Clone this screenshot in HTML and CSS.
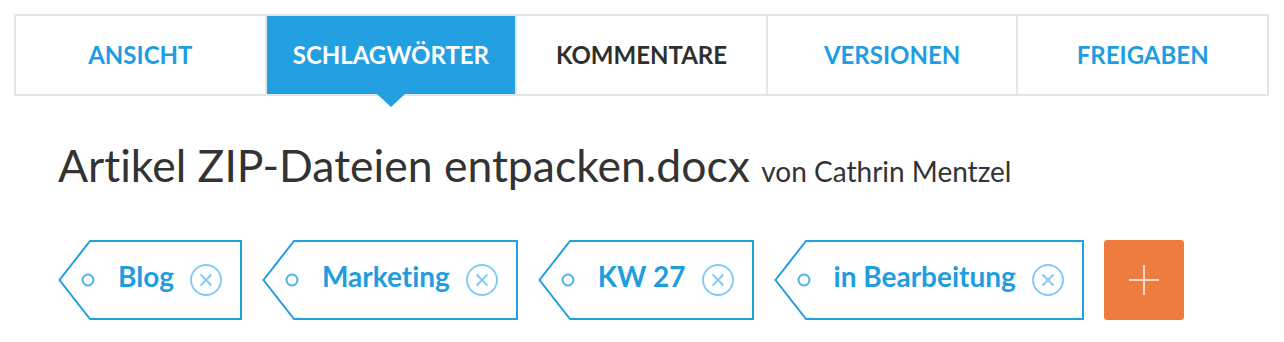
FILE: index.html
```html
<!DOCTYPE html>
<html lang="de">
<head>
<meta charset="utf-8">
<title>Schlagwörter</title>
<link rel="stylesheet" href="styles.css">
</head>
<body>
<nav class="tabs">
  <a class="tab">Ansicht</a>
  <a class="tab tab-active">Schlagwörter</a>
  <a class="tab tab-dark">Kommentare</a>
  <a class="tab">Versionen</a>
  <a class="tab">Freigaben</a>
</nav>
<main class="content">
  <h1 class="title">Artikel ZIP-Dateien entpacken.docx <span class="author">von Cathrin Mentzel</span></h1>
  <div class="tags">
    <div class="tag">
      <svg class="tag-tip" width="40" height="80" viewBox="0 0 40 80"><path d="M40 1 H32 L1.5 40 L32 79 H40" fill="none" stroke="#21a0e0" stroke-width="2"/><circle cx="30" cy="40" r="5.5" fill="none" stroke="#4fb2e8" stroke-width="2"/></svg>
      <div class="tag-body"><span class="tag-label">Blog</span><svg class="tag-x" width="32" height="32" viewBox="0 0 32 32"><circle cx="16" cy="16" r="15" fill="none" stroke="#86ccf1" stroke-width="2"/><path d="M10.5 10.5 L21.5 21.5 M21.5 10.5 L10.5 21.5" stroke="#86ccf1" stroke-width="2"/></svg></div>
    </div>
    <div class="tag">
      <svg class="tag-tip" width="40" height="80" viewBox="0 0 40 80"><path d="M40 1 H32 L1.5 40 L32 79 H40" fill="none" stroke="#21a0e0" stroke-width="2"/><circle cx="30" cy="40" r="5.5" fill="none" stroke="#4fb2e8" stroke-width="2"/></svg>
      <div class="tag-body"><span class="tag-label">Marketing</span><svg class="tag-x" width="32" height="32" viewBox="0 0 32 32"><circle cx="16" cy="16" r="15" fill="none" stroke="#86ccf1" stroke-width="2"/><path d="M10.5 10.5 L21.5 21.5 M21.5 10.5 L10.5 21.5" stroke="#86ccf1" stroke-width="2"/></svg></div>
    </div>
    <div class="tag">
      <svg class="tag-tip" width="40" height="80" viewBox="0 0 40 80"><path d="M40 1 H32 L1.5 40 L32 79 H40" fill="none" stroke="#21a0e0" stroke-width="2"/><circle cx="30" cy="40" r="5.5" fill="none" stroke="#4fb2e8" stroke-width="2"/></svg>
      <div class="tag-body"><span class="tag-label">KW 27</span><svg class="tag-x" width="32" height="32" viewBox="0 0 32 32"><circle cx="16" cy="16" r="15" fill="none" stroke="#86ccf1" stroke-width="2"/><path d="M10.5 10.5 L21.5 21.5 M21.5 10.5 L10.5 21.5" stroke="#86ccf1" stroke-width="2"/></svg></div>
    </div>
    <div class="tag">
      <svg class="tag-tip" width="40" height="80" viewBox="0 0 40 80"><path d="M40 1 H32 L1.5 40 L32 79 H40" fill="none" stroke="#21a0e0" stroke-width="2"/><circle cx="30" cy="40" r="5.5" fill="none" stroke="#4fb2e8" stroke-width="2"/></svg>
      <div class="tag-body"><span class="tag-label">in Bearbeitung</span><svg class="tag-x" width="32" height="32" viewBox="0 0 32 32"><circle cx="16" cy="16" r="15" fill="none" stroke="#86ccf1" stroke-width="2"/><path d="M10.5 10.5 L21.5 21.5 M21.5 10.5 L10.5 21.5" stroke="#86ccf1" stroke-width="2"/></svg></div>
    </div>
    <button class="add-btn" type="button" aria-label="Schlagwort hinzufügen"><svg width="30" height="30" viewBox="0 0 30 30"><path d="M0 15 H30 M15 0 V30" stroke="#fbd9c4" stroke-width="2"/></svg></button>
  </div>
</main>
</body>
</html>
```

FILE: styles.css
```css
html, body {
  margin: 0;
  padding: 0;
  background: #ffffff;
}

body {
  padding: 14px 15px 0 14px;
  font-family: Lato, "Open Sans", sans-serif;
  font-variant-ligatures: no-common-ligatures;
}

.tabs {
  display: flex;
  border: 2px solid #e2e6ea;
  height: 78px;
}

.tab {
  flex: 1 1 0;
  display: flex;
  align-items: center;
  justify-content: center;
  border-left: 2px solid #e2e6ea;
  padding-bottom: 2px;
  text-transform: uppercase;
  font-weight: 700;
  font-size: 24px;
  color: #1f9de0;
  position: relative;
}

.tab:first-child {
  border-left: none;
}

.tab-dark {
  color: #2f2f2f;
}

.tab-active {
  background: #22a0e1;
  color: #ffffff;
}

.tab-active::after {
  content: "";
  position: absolute;
  top: 100%;
  left: 50%;
  margin-left: -14px;
  border-top: 13px solid #22a0e1;
  border-left: 14px solid transparent;
  border-right: 14px solid transparent;
}

.content {
  padding-left: 44px;
}

.title {
  margin: 45px 0 0 0;
  font-weight: 400;
  font-size: 44.5px;
  line-height: 48px;
  color: #333333;
}

.author {
  font-size: 28px;
}

.tags {
  display: flex;
  align-items: center;
  gap: 20px;
  margin-top: 45px;
}

.tag {
  display: flex;
  height: 80px;
}

.tag-tip {
  display: block;
  flex: none;
}

.tag-body {
  display: flex;
  align-items: center;
  border: 2px solid #21a0e0;
  border-left: none;
  padding: 0 18px 0 20px;
  gap: 16px;
}

.tag-label {
  font-weight: 700;
  font-size: 28px;
  color: #1e9ddf;
  margin-bottom: 9px;
}

.tag-x {
  display: block;
  flex: none;
}

.add-btn {
  width: 80px;
  height: 80px;
  border: none;
  border-radius: 3px;
  background: #ee7c3e;
  display: flex;
  align-items: center;
  justify-content: center;
  padding: 0;
}
```
